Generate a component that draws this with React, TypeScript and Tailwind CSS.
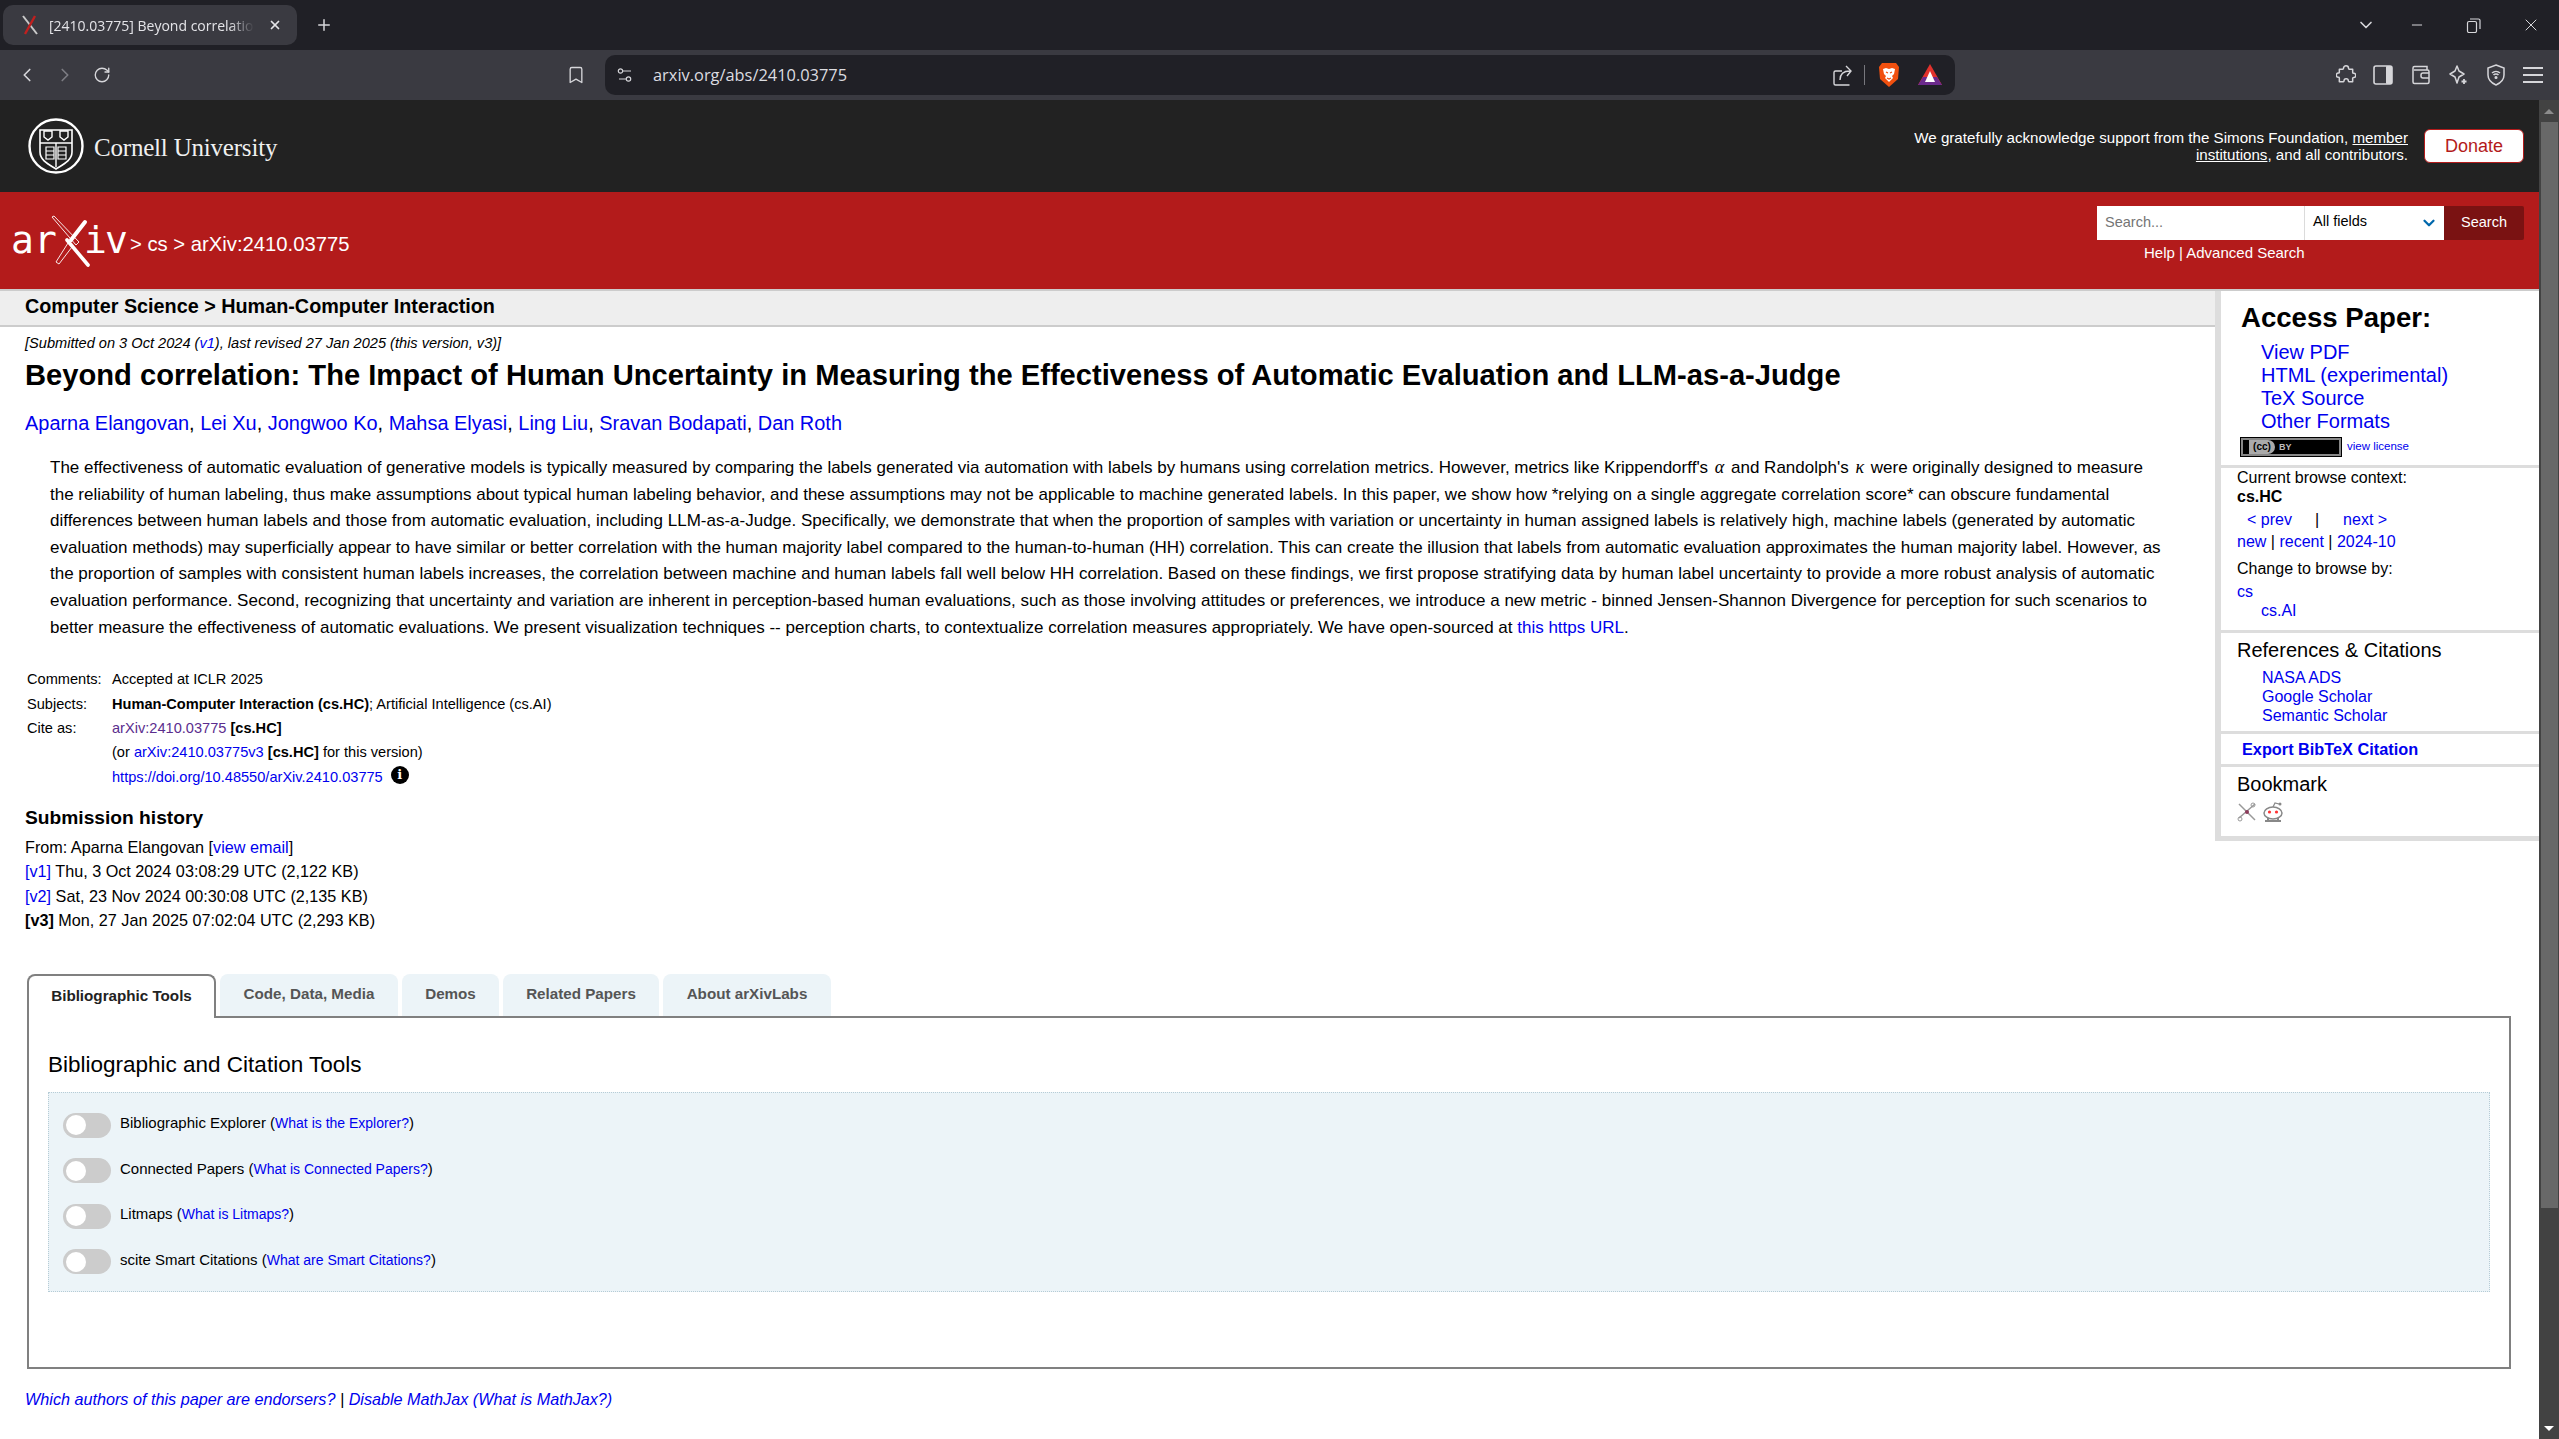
// arXiv abstract page inside a dark Brave browser window

import { ChevronDown, ChevronLeft, ChevronRight, Bookmark, Minus, Plus, RotateCw, X } from 'lucide-react'

const abstractLines = [
  'the reliability of human labeling, thus make assumptions about typical human labeling behavior, and these assumptions may not be applicable to machine generated labels. In this paper, we show how *relying on a single aggregate correlation score* can obscure fundamental',
  'differences between human labels and those from automatic evaluation, including LLM-as-a-Judge. Specifically, we demonstrate that when the proportion of samples with variation or uncertainty in human assigned labels is relatively high, machine labels (generated by automatic',
  'evaluation methods) may superficially appear to have similar or better correlation with the human majority label compared to the human-to-human (HH) correlation. This can create the illusion that labels from automatic evaluation approximates the human majority label. However, as',
  'the proportion of samples with consistent human labels increases, the correlation between machine and human labels fall well below HH correlation. Based on these findings, we first propose stratifying data by human label uncertainty to provide a more robust analysis of automatic',
  'evaluation performance. Second, recognizing that uncertainty and variation are inherent in perception-based human evaluations, such as those involving attitudes or preferences, we introduce a new metric - binned Jensen-Shannon Divergence for perception for such scenarios to',
]

const authors = ['Aparna Elangovan', 'Lei Xu', 'Jongwoo Ko', 'Mahsa Elyasi', 'Ling Liu', 'Sravan Bodapati', 'Dan Roth']

const tools = [
  { label: 'Bibliographic Explorer', link: 'What is the Explorer?' },
  { label: 'Connected Papers', link: 'What is Connected Papers?' },
  { label: 'Litmaps', link: 'What is Litmaps?' },
  { label: 'scite Smart Citations', link: 'What are Smart Citations?' },
]

const tabs = [
  { label: 'Code, Data, Media', width: 'w-[178px]' },
  { label: 'Demos', width: 'w-[97px]' },
  { label: 'Related Papers', width: 'w-[156px]' },
  { label: 'About arXivLabs', width: 'w-[168px]' },
]

function Link({ children, className = '' }: { children: React.ReactNode; className?: string }) {
  return <a className={`text-[#0000ee] ${className}`}>{children}</a>
}

function BraveLion() {
  return (
    <svg width="22" height="26" viewBox="0 0 22 26">
      <path d="M4 1h14l3 4-1 12-9 8-9-8L1 5z" fill="#f1500f" />
      <path d="M5 7l3-1 3 1 3-1 3 1-1 5-2 2 1 2-4 4-4-4 1-2-2-2z" fill="#fff" />
      <path d="M8 10l2 1M14 10l-2 1M9 16l2 1 2-1" stroke="#f1500f" strokeWidth="1.2" fill="none" />
    </svg>
  )
}

function RewardsTriangle() {
  return (
    <svg width="24" height="22" viewBox="0 0 24 22">
      <path d="M12 0L24 21H15L12 8z" fill="#e2322d" />
      <path d="M12 0L0 21h9l3-13z" fill="#e2322d" />
      <path d="M0 21L5 13h14l5 8z" fill="#6b2a8c" />
      <path d="M12 7l5 11H7z" fill="#fff" />
    </svg>
  )
}

function BrowserChrome() {
  return (
    <div className="shrink-0 text-[#d6d6da] font-['Open_Sans',sans-serif]">
      <div className="flex h-[50px] items-center bg-[#202026] pl-[3px]">
        <div className="flex h-[40px] w-[294px] items-center rounded-[10px] bg-[#3a3a41] pl-[19px]">
          <svg width="16" height="20" viewBox="0 0 16 20" className="shrink-0">
            <path d="M1 1l14 18" stroke="#c9c9c9" strokeWidth="2" />
            <path d="M13 1L3 19" stroke="#c0201f" strokeWidth="2.4" />
          </svg>
          <span className="ml-[11px] w-[205px] overflow-hidden whitespace-nowrap text-[14px] text-[#e4e4e8] [mask-image:linear-gradient(to_right,black_88%,transparent)]">[2410.03775] Beyond correlatio</span>
          <X size={14} strokeWidth={3} className="ml-[14px] text-[#e4e4e8]" />
        </div>
        <Plus size={18} className="ml-[18px] text-[#d6d6da]" />
        <ChevronDown size={20} strokeWidth={2} className="ml-[2023px]" />
        <Minus size={16} strokeWidth={1.5} className="ml-[33px]" />
        <svg width="15" height="15" viewBox="0 0 15 15" fill="none" stroke="currentColor" strokeWidth="1.2" className="ml-[41px]">
          <rect x="1.5" y="3.5" width="9" height="11" rx="1.5" />
          <path d="M4 1h8.5a1.5 1.5 0 0 1 1.5 1.5V11" />
        </svg>
        <X size={20} strokeWidth={1.2} className="ml-[40px]" />
      </div>
      <div className="flex h-[50px] items-center bg-[#3a3a41] pl-[16px]">
        <ChevronLeft size={22} strokeWidth={1.8} />
        <ChevronRight size={22} strokeWidth={1.8} className="ml-[16px] text-[#7d7d84]" />
        <RotateCw size={18} strokeWidth={1.8} className="ml-[17px]" />
        <Bookmark size={20} strokeWidth={1.6} className="ml-[455px]" />
        <div className="ml-[19px] flex h-[40px] w-[1350px] items-center rounded-[10px] bg-[#202026] pl-[12px]">
          <svg width="16" height="16" viewBox="0 0 16 16" fill="none" stroke="currentColor" strokeWidth="1.2" className="shrink-0">
            <circle cx="3.500" cy="4" r="2.200" />
            <path d="M6 4h8M2 12h7" />
            <circle cx="11.500" cy="12" r="2.200" />
          </svg>
          <span className="ml-[20px] text-[16.400px] text-[#dcdce0]">arxiv.org/abs/2410.03775</span>
          <svg width="22" height="22" viewBox="0 0 22 22" fill="none" stroke="currentColor" strokeWidth="1.400" className="ml-[985px] shrink-0">
            <path d="M10 7H3.500A1.500 1.500 0 0 0 2 8.500V19.500A1.500 1.500 0 0 0 3.500 21H17.500" />
            <path d="M8 16c0-6 3-9 10-9M14 2l5 5-4 5" />
          </svg>
          <div className="ml-[10px] h-[20px] w-px bg-[#77777d]" />
          <div className="ml-[13px] flex"><BraveLion /></div>
          <div className="ml-[18px] flex"><RewardsTriangle /></div>
        </div>
        <svg width="20" height="20" viewBox="0 0 24 24" fill="none" stroke="currentColor" strokeWidth="1.8" strokeLinejoin="round" className="ml-[381px] shrink-0">
          <path d="M9 4a3 3 0 0 1 6 0c0 1 .5 1 1 1h4v4c0 .7.6 1 1.2 1a2.5 2.5 0 0 1 0 5c-.6 0-1.2.3-1.2 1v4h-4.500c-.5 0-.7-.5-.7-1a2.600 2.600 0 0 0-5.200 0c0 .5-.2 1-.7 1H4v-4.500c0-.5-.5-.7-1-.7a2.600 2.600 0 0 1 0-5.200c.5 0 1-.2 1-.7V5h4c.5 0 1-.3 1-1z" />
        </svg>
        <svg width="20" height="20" viewBox="0 0 20 20" className="ml-[17px] shrink-0">
          <rect x="1" y="1" width="18" height="18" rx="2" fill="none" stroke="currentColor" strokeWidth="1.6" />
          <rect x="13" y="1" width="6" height="18" rx="1" fill="currentColor" />
        </svg>
        <svg width="20" height="20" viewBox="0 0 20 20" fill="none" stroke="currentColor" strokeWidth="1.5" className="ml-[18px] shrink-0">
          <path d="M2 5V3a1.500 1.500 0 0 1 1.500-1.500H16V5M2 4v13a1.500 1.500 0 0 0 1.500 1.500h13A1.500 1.500 0 0 0 18 17V6.500A1.500 1.500 0 0 0 16.500 5H3" />
          <path d="M18 8h-6a2 2 0 0 0-2 2v1a2 2 0 0 0 2 2h6" />
        </svg>
        <svg width="20" height="20" viewBox="0 0 20 20" fill="none" stroke="currentColor" strokeWidth="1.5" strokeLinejoin="round" className="ml-[17px] shrink-0">
          <path d="M9 1l2 5 5 3-5 3-2 6-2-6-5-3 5-3z" />
          <path d="M16 14v5M13.500 16.500h5" strokeWidth="1.800" />
        </svg>
        <svg width="20" height="22" viewBox="0 0 20 22" fill="none" stroke="currentColor" strokeWidth="1.5" className="ml-[18px] shrink-0">
          <path d="M10 1l8 3v7c0 5-3.500 8-8 10-4.500-2-8-5-8-10V4z" />
          <path d="M6 9a6 6 0 0 1 8 0M7.500 11a3.500 3.500 0 0 1 5 0" />
          <circle cx="10" cy="13.500" r=".8" fill="currentColor" />
        </svg>
        <div className="ml-[17px] flex w-[20px] shrink-0 flex-col gap-[5px]">
          <div className="h-[2px] bg-current" />
          <div className="h-[2px] bg-current" />
          <div className="h-[2px] bg-current" />
        </div>
      </div>
    </div>
  )
}

function CornellSeal() {
  return (
    <svg width="56" height="56" viewBox="0 0 56 56" fill="none" stroke="#fff" className="shrink-0">
      <circle cx="28" cy="28" r="26.500" strokeWidth="2.400" />
      <path d="M12 12h32v22c0 8-8 12-16 17-8-5-16-9-16-17z" strokeWidth="1.600" />
      <path d="M12 25h32M28 25v24" strokeWidth="1.400" />
      <path d="M16 13l0 6 4 3 4-3v-6zM32 13v6l4 3 4-3v-6z" strokeWidth="1.400" />
      <path d="M18 29h8v12h-8zM30 29h8v12h-8zM18 33h8M18 37h8M30 33h8M30 37h8" strokeWidth="1.200" />
    </svg>
  )
}

function ArxivLogo() {
  return (
    <div className="flex h-[52px] w-[112px] items-center text-white font-['DejaVu_Sans_Mono',monospace] text-[38px] leading-none">
      <span className="mb-[1px] -ml-[2px] w-[46px] shrink-0">ar</span>
      <svg width="42" height="52" viewBox="0 0 42 52" fill="none" className="-ml-[7px] shrink-0">
        <path d="M2 2l2-1 25 26-3 3z" stroke="#fff" strokeWidth=".9" />
        <path d="M18 28L6 47l3 2 13-17" stroke="#fff" strokeWidth=".9" />
        <path d="M17 25l21 25" stroke="#fff" strokeWidth="3.600" strokeLinecap="round" />
        <path d="M35 7L21 25" stroke="#fff" strokeWidth="4" strokeLinecap="round" />
      </svg>
      <span className="-ml-[8px] mb-[1px] shrink-0 tracking-[-2px]">iv</span>
    </div>
  )
}

function SiteHeader() {
  return (
    <>
      <div className="flex h-[92px] items-center bg-[#222222] pl-[28px] pr-[15px]">
        <CornellSeal />
        <span className="ml-[10px] mt-[3px] font-['Liberation_Serif',serif] text-[25px] tracking-[-0.2px] text-[#f0f0f0]">Cornell University</span>
        <p className="mb-[1px] ml-auto text-right text-[15.150px] leading-[17px] text-white">
          We gratefully acknowledge support from the Simons Foundation, <a className="underline">member</a><br />
          <a className="underline">institutions</a>, and all contributors.
        </p>
        <div className="ml-[16px] flex h-[34px] w-[100px] items-center justify-center rounded-[6px] border border-[#b31b1b] bg-white text-[18px] text-[#b31b1b]">Donate</div>
      </div>
      <div className="flex h-[97px] items-center justify-between bg-[#b31b1b] pl-[13px] pr-[15px]">
        <div className="flex items-center text-white">
          <ArxivLogo />
          <span className="ml-[5px] mt-[8px] text-[20.250px]">&gt; cs &gt; arXiv:2410.03775</span>
        </div>
        <div className="mb-[15px] flex flex-col">
          <div className="flex h-[34px] w-[427px] text-[14.500px]">
            <div className="flex w-[207px] items-center bg-white pl-[8px] text-[#757575]">Search...</div>
            <div className="flex w-[140px] items-center justify-between border-l border-[#dbdbdb] bg-white pb-[2px] pl-[8px] pr-[6px] text-black">
              All fields
              <ChevronDown size={18} strokeWidth={3} className="mt-[2px] text-[#0068ac]" />
            </div>
            <div className="flex w-[80px] items-center justify-center rounded-r-[2px] bg-[#7a1212] text-white">Search</div>
          </div>
          <div className="ml-[47px] mt-[4px] text-[15px] leading-[17px] text-white">Help | Advanced Search</div>
        </div>
      </div>
    </>
  )
}

function Toggle() {
  return (
    <div className="flex h-[25px] w-[48px] shrink-0 items-center rounded-full bg-[#cccccc] pl-[3px]">
      <div className="h-[20px] w-[20px] rounded-full bg-white" />
    </div>
  )
}

function LabsTabs() {
  return (
    <div className="ml-[27px] mr-[28px] mt-[42px]">
      <div className="flex h-[42px] gap-[4px] text-[15.200px] font-bold">
        <div className="z-10 flex h-[44px] w-[189px] items-center justify-center rounded-t-[8px] border-2 border-b-0 border-[#808080] bg-white pb-[2px] text-[#222]">Bibliographic Tools</div>
        {tabs.map((tab) => (
          <div key={tab.label} className={`flex items-center justify-center rounded-t-[8px] bg-[#ecf4f8] pb-[2px] text-[#555] ${tab.width}`}>{tab.label}</div>
        ))}
      </div>
      <div className="h-[353px] border-2 border-[#808080] bg-white px-[19px] pt-[33px]">
        <h3 className="text-[22.500px] leading-[28px] text-black">Bibliographic and Citation Tools</h3>
        <div className="mt-[13px] flex h-[200px] flex-col gap-[20px] border border-dotted border-[#b6ccd6] bg-[#ecf4f8] pl-[14px] pt-[19px]">
          {tools.map((tool) => (
            <div key={tool.label} className="flex items-center gap-[9px] text-[15px] text-black">
              <Toggle />
              <span className="mb-[3px]">{tool.label} (<Link className="text-[14px]">{tool.link}</Link>)</span>
            </div>
          ))}
        </div>
      </div>
      <p className="-ml-[2px] mt-[18px] text-[16.200px] italic text-[#0000ee]">
        Which authors of this paper are endorsers? <span className="text-black">|</span> Disable MathJax (What is MathJax?)
      </p>
    </div>
  )
}

function MainColumn() {
  return (
    <div className="min-w-0 flex-1">
      <div className="flex h-[36px] items-center border-b-2 border-[#cccccc] bg-[#eeeeee] pb-[2px] pl-[25px] text-[19.800px] font-bold">
        Computer Science &gt; Human-Computer Interaction
      </div>
      <p className="ml-[25px] mt-[6px] text-[14.600px] italic leading-[20px]">[Submitted on 3 Oct 2024 (<Link>v1</Link>), last revised 27 Jan 2025 (this version, v3)]</p>
      <h1 className="ml-[25px] mt-[3px] text-[29.150px] font-bold leading-[38px] whitespace-nowrap">
        Beyond correlation: The Impact of Human Uncertainty in Measuring the Effectiveness of Automatic Evaluation and LLM-as-a-Judge
      </h1>
      <p className="ml-[25px] mt-[16px] text-[19.950px] leading-[26px]">
        {authors.map((author, i) => (
          <span key={author}><Link>{author}</Link>{i < authors.length - 1 ? ', ' : ''}</span>
        ))}
      </p>
      <div className="ml-[50px] mt-[19px] text-[17px] leading-[26.600px] whitespace-nowrap">
        <div>The effectiveness of automatic evaluation of generative models is typically measured by comparing the labels generated via automation with labels by humans using correlation metrics. However, metrics like Krippendorff's <i className="mx-[2px] font-['Liberation_Serif',serif] text-[18px] leading-none">α</i> and Randolph's <i className="mx-[2px] font-['Liberation_Serif',serif] text-[18px] leading-none">κ</i> were originally designed to measure</div>
        {abstractLines.map((line) => <div key={line}>{line}</div>)}
        <div>better measure the effectiveness of automatic evaluations. We present visualization techniques -- perception charts, to contextualize correlation measures appropriately. We have open-sourced at <Link>this https URL</Link>.</div>
      </div>
      <div className="ml-[27px] mt-[26px] grid grid-cols-[85px_1fr] text-[14.600px] leading-[24.400px]">
        <div>Comments:</div><div>Accepted at ICLR 2025</div>
        <div>Subjects:</div><div><b>Human-Computer Interaction (cs.HC)</b>; Artificial Intelligence (cs.AI)</div>
        <div>Cite as:</div><div><a className="text-[#5b2d8e]">arXiv:2410.03775</a> <b>[cs.HC]</b></div>
        <div />
        <div>(or <Link>arXiv:2410.03775v3</Link> <b>[cs.HC]</b> for this version)</div>
        <div />
        <div className="flex items-center">
          <Link>https://doi.org/10.48550/arXiv.2410.03775</Link>
          <div className="mb-[4px] ml-[8px] flex h-[18px] w-[18px] items-center justify-center rounded-full bg-black font-['DejaVu_Serif',serif] text-[13px] leading-none font-bold text-white">i</div>
        </div>
      </div>
      <h2 className="ml-[25px] mt-[17px] text-[19.200px] font-bold leading-[24px]">Submission history</h2>
      <div className="ml-[25px] mt-[5px] text-[16.200px] leading-[24.300px]">
        <div>From: Aparna Elangovan [<Link>view email</Link>]</div>
        <div><Link>[v1]</Link> Thu, 3 Oct 2024 03:08:29 UTC (2,122 KB)</div>
        <div><Link>[v2]</Link> Sat, 23 Nov 2024 00:30:08 UTC (2,135 KB)</div>
        <div><b>[v3]</b> Mon, 27 Jan 2025 07:02:04 UTC (2,293 KB)</div>
      </div>
    </div>
  )
}

function Sidebar() {
  return (
    <div className="h-[550px] w-[324px] shrink-0 border-b-[5px] border-l-[6px] border-[#dddddd] bg-white text-black">
      <div className="h-[177px] border-b-[3px] border-[#dddddd] pl-[20px] pt-[10px]">
        <h2 className="text-[27.600px] font-bold leading-[34px]">Access Paper:</h2>
        <div className="ml-[20px] mt-[6px] text-[20px] leading-[23px] text-[#0000ee]">
          <div>View PDF</div>
          <div>HTML (experimental)</div>
          <div>TeX Source</div>
          <div>Other Formats</div>
        </div>
        <div className="mt-[5px] flex items-center">
          <div className="flex h-[18px] w-[100px] items-center border-2 border-[#888] bg-black pl-[6px] outline outline-1 outline-black">
            <div className="flex h-[14px] w-[26px] items-center justify-center rounded-r-full bg-[#aaaaaa] text-[10px] font-bold leading-none text-black">(cc)</div>
            <span className="ml-[4px] text-[9px] font-bold leading-none text-[#bbbbbb]">BY</span>
          </div>
          <a className="ml-[6px] text-[11.500px] text-[#0000ee]">view license</a>
        </div>
      </div>
      <div className="h-[165px] border-b-[3px] border-[#dddddd] pl-[16px] text-[16px] leading-[19px]">
        <div>Current browse context:</div>
        <div className="font-bold">cs.HC</div>
        <div className="ml-[10px] mt-[4px] flex text-[#0000ee]">
          <span>&lt; prev</span><span className="ml-[23px] text-black">|</span><span className="ml-[24px]">next &gt;</span>
        </div>
        <div className="mt-[3px] text-[#0000ee]">new <span className="text-black">|</span> recent <span className="text-black">|</span> 2024-10</div>
        <div className="mt-[8px]">Change to browse by:</div>
        <div className="mt-[4px] text-[#0000ee]">cs</div>
        <div className="ml-[24px] text-[#0000ee]">cs.AI</div>
      </div>
      <div className="h-[101px] border-b-[3px] border-[#dddddd] pl-[16px] pt-[5px]">
        <div className="text-[20px] leading-[25px]">References &amp; Citations</div>
        <div className="ml-[25px] mt-[5px] text-[16px] leading-[19px] text-[#0000ee]">
          <div>NASA ADS</div>
          <div>Google Scholar</div>
          <div>Semantic Scholar</div>
        </div>
      </div>
      <div className="flex h-[33px] items-center border-b-[3px] border-[#dddddd] pl-[21px] text-[16.300px] font-bold text-[#0000ee]">Export BibTeX Citation</div>
      <div className="pl-[16px] pt-[5px]">
        <div className="text-[20px] leading-[25px]">Bookmark</div>
        <div className="mt-[5px] flex gap-[5px]">
          <svg width="20" height="20" viewBox="0 0 20 20" fill="none" stroke="#999">
            <path d="M2 2l16 16M18 2L2 16" strokeWidth="1.500" />
            <circle cx="10" cy="10" r="2" fill="#8c3a5a" stroke="none" />
            <circle cx="16" cy="3" r="2" /><circle cx="3" cy="17" r="2" />
          </svg>
          <svg width="22" height="21" viewBox="0 0 22 21">
            <path d="M3 19h16M6 15v4M16 15v4" stroke="#888" strokeWidth="2" />
            <ellipse cx="11" cy="11" rx="9" ry="6" fill="#fff" stroke="#888" strokeWidth="1.500" />
            <circle cx="7.500" cy="10" r="1.600" fill="#f33" /><circle cx="14.500" cy="10" r="1.600" fill="#f33" />
            <path d="M11 5l2-4 4 1" stroke="#888" fill="none" strokeWidth="1.200" />
            <circle cx="18" cy="2" r="1.500" fill="#888" />
          </svg>
        </div>
      </div>
    </div>
  )
}

function Scrollbar() {
  return (
    <div className="flex w-[20px] shrink-0 flex-col items-center bg-[#424242]">
      <div className="mt-[9px] h-0 w-0 border-x-[5px] border-b-[5px] border-x-transparent border-b-[#8c8c8c]" />
      <div className="ml-[1px] mt-[8px] h-[1086px] w-[17px] bg-[#686868]" />
      <div className="mb-[8px] mt-auto h-0 w-0 border-x-[5px] border-t-[5px] border-x-transparent border-t-white" />
    </div>
  )
}

export default function App() {
  return (
    <div className="flex h-[1439px] w-[2559px] flex-col overflow-hidden bg-white font-['Liberation_Sans',Arial,sans-serif] text-black">
      <BrowserChrome />
      <div className="flex min-h-0 flex-1">
        <div className="min-w-0 flex-1">
          <SiteHeader />
          <div className="h-[2px] bg-[#cccccc]" />
          <div className="flex items-start">
            <MainColumn />
            <Sidebar />
          </div>
          <LabsTabs />
        </div>
        <Scrollbar />
      </div>
    </div>
  )
}
